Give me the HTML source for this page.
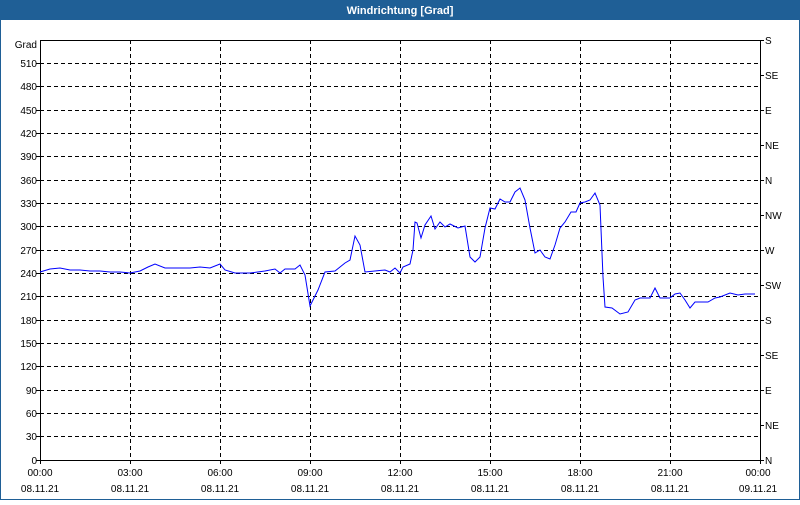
<!DOCTYPE html>
<html><head><meta charset="utf-8"><style>
body{margin:0;width:800px;height:500px;overflow:hidden;background:#fff;font-family:"Liberation Sans",sans-serif}
</style></head><body>
<svg width="800" height="500" xmlns="http://www.w3.org/2000/svg" font-family="Liberation Sans, sans-serif" font-size="10">
<rect x="0" y="0" width="800" height="500" fill="#fff"/>
<rect x="0.5" y="0.5" width="799" height="499" fill="none" stroke="#1f5f96"/>
<rect x="0" y="0" width="800" height="20" fill="#1f5f96"/>
<text x="400" y="14" fill="#fff" font-weight="bold" font-size="11" text-anchor="middle">Windrichtung [Grad]</text>
<g stroke="#000" stroke-dasharray="4,3" stroke-width="1">
<line x1="40" x2="760" y1="63.5" y2="63.5"/><line x1="40" x2="760" y1="86.5" y2="86.5"/><line x1="40" x2="760" y1="110.5" y2="110.5"/><line x1="40" x2="760" y1="133.5" y2="133.5"/><line x1="40" x2="760" y1="156.5" y2="156.5"/><line x1="40" x2="760" y1="180.5" y2="180.5"/><line x1="40" x2="760" y1="203.5" y2="203.5"/><line x1="40" x2="760" y1="226.5" y2="226.5"/><line x1="40" x2="760" y1="250.5" y2="250.5"/><line x1="40" x2="760" y1="273.5" y2="273.5"/><line x1="40" x2="760" y1="296.5" y2="296.5"/><line x1="40" x2="760" y1="320.5" y2="320.5"/><line x1="40" x2="760" y1="343.5" y2="343.5"/><line x1="40" x2="760" y1="366.5" y2="366.5"/><line x1="40" x2="760" y1="390.5" y2="390.5"/><line x1="40" x2="760" y1="413.5" y2="413.5"/><line x1="40" x2="760" y1="436.5" y2="436.5"/>
<line y1="40" y2="460" x1="130.5" x2="130.5"/><line y1="40" y2="460" x1="220.5" x2="220.5"/><line y1="40" y2="460" x1="310.5" x2="310.5"/><line y1="40" y2="460" x1="400.5" x2="400.5"/><line y1="40" y2="460" x1="490.5" x2="490.5"/><line y1="40" y2="460" x1="580.5" x2="580.5"/><line y1="40" y2="460" x1="670.5" x2="670.5"/>
</g>
<rect x="40.5" y="40.5" width="720" height="420" fill="none" stroke="#000"/>
<g stroke="#000">
<path d="M36 63.5h4M36 86.5h4M36 110.5h4M36 133.5h4M36 156.5h4M36 180.5h4M36 203.5h4M36 226.5h4M36 250.5h4M36 273.5h4M36 296.5h4M36 320.5h4M36 343.5h4M36 366.5h4M36 390.5h4M36 413.5h4M36 436.5h4M36 460.5h4"/>
<path d="M760 40.5h4M760 75.5h4M760 110.5h4M760 145.5h4M760 180.5h4M760 215.5h4M760 250.5h4M760 285.5h4M760 320.5h4M760 355.5h4M760 390.5h4M760 425.5h4M760 460.5h4"/>
<path d="M40.5 460v4M130.5 460v4M220.5 460v4M310.5 460v4M400.5 460v4M490.5 460v4M580.5 460v4M670.5 460v4M760.5 460v4"/>
</g>
<g text-anchor="end" fill="#000">
<text x="37" y="48">Grad</text><text x="37" y="67">510</text><text x="37" y="90">480</text><text x="37" y="114">450</text><text x="37" y="137">420</text><text x="37" y="160">390</text><text x="37" y="184">360</text><text x="37" y="207">330</text><text x="37" y="230">300</text><text x="37" y="254">270</text><text x="37" y="277">240</text><text x="37" y="300">210</text><text x="37" y="324">180</text><text x="37" y="347">150</text><text x="37" y="370">120</text><text x="37" y="394">90</text><text x="37" y="417">60</text><text x="37" y="440">30</text><text x="37" y="464">0</text>
</g>
<g fill="#000">
<text x="765" y="44">S</text><text x="765" y="79">SE</text><text x="765" y="114">E</text><text x="765" y="149">NE</text><text x="765" y="184">N</text><text x="765" y="219">NW</text><text x="765" y="254">W</text><text x="765" y="289">SW</text><text x="765" y="324">S</text><text x="765" y="359">SE</text><text x="765" y="394">E</text><text x="765" y="429">NE</text><text x="765" y="464">N</text>
</g>
<g text-anchor="middle" fill="#000">
<text x="40" y="476">00:00</text><text x="40" y="492">08.11.21</text>
<text x="130" y="476">03:00</text><text x="130" y="492">08.11.21</text>
<text x="220" y="476">06:00</text><text x="220" y="492">08.11.21</text>
<text x="310" y="476">09:00</text><text x="310" y="492">08.11.21</text>
<text x="400" y="476">12:00</text><text x="400" y="492">08.11.21</text>
<text x="490" y="476">15:00</text><text x="490" y="492">08.11.21</text>
<text x="580" y="476">18:00</text><text x="580" y="492">08.11.21</text>
<text x="670" y="476">21:00</text><text x="670" y="492">08.11.21</text>
<text x="758" y="476">00:00</text><text x="758" y="492">09.11.21</text>
</g>
<polyline fill="none" stroke="#0000ff" stroke-width="1" points="40,272 50,269 60,268 70,270 80,270 90,271 100,271 110,272 120,272 130,273 140,271 148,267 155,264 165,268 180,268 190,268 200,267 210,268 220,264 225,270 235,273 250,273 265,271 275,269 280,273 285,269 295,269 300,265 305,275 310,306 318,290 325,272 335,271 345,263 350,260 355,236 360,245 365,272 375,271 385,270 390,272 395,268 400,273 403,267 410,264 413,250 415,222 417,223 421,238 425,225 431,216 435,229 440,222 445,227 450,224 458,228 465,226 470,257 475,262 480,257 485,228 490,208 495,209 500,199 505,202 510,202 515,192 520,188 525,200 530,228 535,253 540,250 545,257 550,259 555,245 560,228 565,222 571,212 576,212 580,203 585,202 590,200 595,193 600,205 603,277 605,307 612,308 620,314 628,312 635,300 640,298 650,298 655,288 660,298 670,298 675,294 680,293 685,300 690,308 695,302 700,302 708,302 715,298 720,297 730,293 738,295 745,294 755,294"/>
</svg>
</body></html>
